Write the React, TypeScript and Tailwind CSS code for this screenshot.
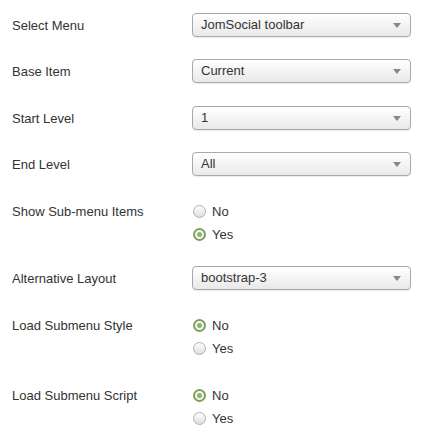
import React from "react";

function Select({ value }: { value: string }) {
  return (
    <div className="relative flex h-[24px] w-[219px] items-center rounded-[4px] border border-[#a9a9a9] bg-gradient-to-b from-white to-[#e9e9e9] pl-[8px] text-[13px] text-[#333] shadow-[0_1px_1px_rgba(0,0,0,0.08)]">
      {value}
      <span className="absolute right-[9px] top-[9px] h-0 w-0 border-x-[4px] border-t-[5px] border-x-transparent border-t-[#888]" />
    </div>
  );
}

function Radio({ label, checked }: { label: string; checked?: boolean }) {
  return (
    <div className="flex h-[23px] items-center gap-[6px] text-[13px] text-[#333]">
      {checked ? (
        <span className="ml-[1px] flex h-[13px] w-[13px] items-center justify-center rounded-full border-2 border-[#7ea05e] bg-[#f4f7f0]">
          <span className="h-[5px] w-[5px] rounded-full bg-[#8db46c]" />
        </span>
      ) : (
        <span className="ml-[1px] h-[13px] w-[13px] rounded-full border border-[#b0b0b0] bg-gradient-to-b from-white to-[#dedede]" />
      )}
      {label}
    </div>
  );
}

function SelectRow({ label, value, mt }: { label: string; value: string; mt: string }) {
  return (
    <div className={`flex items-center ${mt}`}>
      <div className="w-[180px] pt-[1px]">{label}</div>
      <Select value={value} />
    </div>
  );
}

function RadioRow({ label, yes, mt }: { label: string; yes: boolean; mt: string }) {
  return (
    <div className={`flex items-start ${mt}`}>
      <div className="w-[180px] leading-[23px]">{label}</div>
      <div className="flex flex-col">
        <Radio label="No" checked={!yes} />
        <Radio label="Yes" checked={yes} />
      </div>
    </div>
  );
}

export default function App() {
  return (
    <div className="h-[441px] w-[428px] bg-white px-[12px] pt-[13px] text-[13px] text-[#333] [font-family:'Liberation_Sans',Arial,sans-serif]">
      <SelectRow label="Select Menu" value="JomSocial toolbar" mt="mt-0" />
      <SelectRow label="Base Item" value="Current" mt="mt-[22px]" />
      <SelectRow label="Start Level" value="1" mt="mt-[23px]" />
      <SelectRow label="End Level" value="All" mt="mt-[22px]" />
      <RadioRow label="Show Sub-menu Items" yes={true} mt="mt-[24px]" />
      <SelectRow label="Alternative Layout" value="bootstrap-3" mt="mt-[20px]" />
      <RadioRow label="Load Submenu Style" yes={false} mt="mt-[24px]" />
      <RadioRow label="Load Submenu Script" yes={false} mt="mt-[24px]" />
    </div>
  );
}
